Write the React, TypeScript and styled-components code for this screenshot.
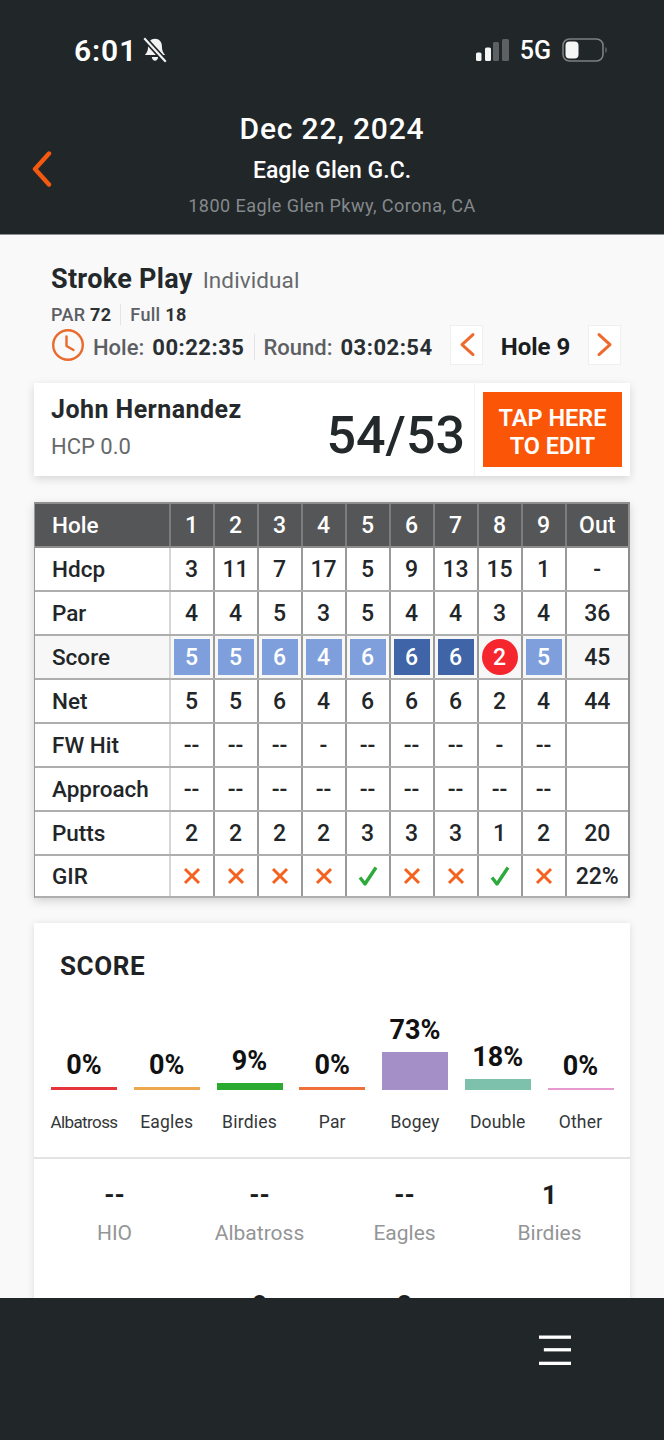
import React from 'react';
import styled, { createGlobalStyle } from 'styled-components';

const GlobalStyle = createGlobalStyle`
  html, body { margin: 0; padding: 0; background: #212629; }
  * { box-sizing: border-box; }
  body { font-family: Roboto, "Liberation Sans", sans-serif; }
`;

const Screen = styled.div`
  width: 664px;
  height: 1440px;
  display: flex;
  flex-direction: column;
  overflow: hidden;
  background: #f9f9fa;
`;

const TopBar = styled.header`
  height: 235px;
  flex: none;
  background: #212629;
  color: #fff;
  border-bottom: 1px solid #8d9093;
`;

const StatusBar = styled.div`
  height: 100px;
  padding: 30px 56px 0 74px;
  display: flex;
  justify-content: space-between;
  align-items: flex-start;
`;

const StatusGroup = styled.div`
  display: flex;
  align-items: center;
  height: 40px;
  gap: ${props => props.$gap}px;
`;

const Clock = styled.span`
  font-size: 30px;
  font-weight: 600;
  letter-spacing: 0.9px;
`;

const Network = styled.span`
  font-size: 25px;
  font-weight: 500;
`;

const TitleRow = styled.div`
  display: grid;
  grid-template-columns: 1fr auto 1fr;
  align-items: center;
`;

const BackLink = styled.div`
  padding-left: 30px;
  padding-top: 14px;
  display: flex;
`;

const TitleStack = styled.div`
  display: flex;
  flex-direction: column;
  align-items: center;
  margin-top: 10px;
`;

const DateText = styled.div`
  font-size: 30px;
  line-height: 38px;
  font-weight: 500;
  letter-spacing: 0.8px;
`;

const CourseText = styled.div`
  font-size: 23px;
  line-height: 36px;
  font-weight: 500;
  margin-top: 5px;
`;

const AddressText = styled.div`
  font-size: 18px;
  line-height: 34px;
  color: #85898c;
  letter-spacing: 0.45px;
`;

const Content = styled.main`
  flex: 1;
  min-height: 0;
  overflow: hidden;
  padding: 28px 34px 0;
`;

const RoundInfo = styled.section`
  padding: 0 9px 0 17px;
`;

const PlayLine = styled.div`
  display: flex;
  align-items: baseline;
  gap: 10px;
  height: 34px;
`;

const PlayName = styled.span`
  font-size: 27px;
  font-weight: 700;
  color: #23282b;
  letter-spacing: 0.3px;
`;

const PlayType = styled.span`
  font-size: 22.5px;
  color: #66696c;
  letter-spacing: 0.1px;
`;

const ParLine = styled.div`
  display: flex;
  align-items: center;
  height: 26px;
  margin-top: 4px;
  font-size: 18px;
  font-weight: 500;
  color: #5c6063;
  letter-spacing: 0.3px;
`;

const ParItem = styled.span`
  padding-right: 9px;
  & + & {
    padding-left: 9px;
    border-left: 1px solid #e4e4e6;
  }
  b {
    color: #2d3134;
    font-weight: 700;
  }
`;

const TimerLine = styled.div`
  display: flex;
  align-items: center;
  height: 40px;
  margin-top: -2px;
`;

const TimerText = styled.span`
  font-size: 22px;
  font-weight: 500;
  color: #5c6063;
  margin-left: ${props => props.$left || 0}px;
  padding-top: 4px;
  white-space: nowrap;
  b {
    color: #2a2f32;
    font-weight: 700;
    margin-left: 8px;
    letter-spacing: 0.5px;
  }
`;

const TimerDivider = styled.span`
  width: 1px;
  height: 26px;
  background: #e4e4e6;
  margin-left: 10px;
  margin-right: 8px;
  margin-top: 4px;
`;

const HoleNav = styled.div`
  margin-left: auto;
  display: flex;
  align-items: center;
`;

const HoleButton = styled.div`
  width: 33px;
  height: 40px;
  background: #fff;
  border: 1px solid #efeff0;
  display: flex;
  align-items: center;
  justify-content: center;
`;

const HoleLabel = styled.span`
  width: 105px;
  text-align: center;
  font-size: 24px;
  font-weight: 700;
  color: #1b1e20;
  padding-top: 4px;
`;

const PlayerCard = styled.section`
  height: 93px;
  margin-top: 18px;
  background: #fff;
  box-shadow: 0 3px 9px rgba(0, 0, 0, 0.14);
  display: flex;
  align-items: center;
  padding-left: 17px;
`;

const PlayerInfo = styled.div`
  flex: 1;
  padding-bottom: 4px;
`;

const PlayerName = styled.div`
  font-size: 25px;
  line-height: 32px;
  font-weight: 700;
  color: #26292c;
  letter-spacing: 0.45px;
`;

const PlayerHcp = styled.div`
  font-size: 22px;
  line-height: 30px;
  color: #66696c;
  margin-top: 6px;
`;

const TotalScore = styled.div`
  font-size: 52px;
  font-weight: 500;
  color: #23282b;
  padding-right: 9px;
  margin-top: 12px;
`;

const EditCell = styled.div`
  height: 100%;
  padding: 9px 8px 9px 8px;
  border-left: 1px solid #f3f3f4;
`;

const EditButton = styled.div`
  width: 139px;
  height: 75px;
  background: #fb5607;
  color: #fff;
  font-size: 23.5px;
  line-height: 28px;
  font-weight: 600;
  text-align: center;
  display: flex;
  align-items: center;
  justify-content: center;
  padding-top: 4px;
`;

const ScoreTable = styled.section`
  width: 596px;
  margin-top: 26px;
  background: #fff;
  border-top: 2px solid #8e8e8e;
  border-left: 1px solid #9a9a9a;
  border-right: 2px solid #8e8e8e;
  box-shadow: 0 3px 9px rgba(0, 0, 0, 0.16);
`;

const TableRow = styled.div`
  display: grid;
  grid-template-columns: 135.5px repeat(9, 44px) 1fr;
  height: ${props => props.$height || 44}px;
  background: ${props => (props.$head ? '#555657' : props.$tint ? '#f7f7f7' : '#fff')};
  color: ${props => (props.$head ? '#fff' : '#222629')};
  border-bottom: 2px solid ${props => (props.$head ? '#8e8e8e' : '#aeaeae')};
`;

const LabelCell = styled.div`
  display: flex;
  align-items: center;
  padding-left: 17px;
  font-size: 22.5px;
  font-weight: 500;
  border-right: 2px solid ${props => (props.$head ? '#7d7d7d' : '#d6d6d6')};
`;

const ValueCell = styled.div`
  display: flex;
  align-items: center;
  justify-content: center;
  font-size: 23px;
  font-weight: 500;
  border-right: 2px solid ${props => (props.$head ? '#7d7d7d' : '#9a9a9a')};
  &:last-child {
    border-right: 0;
  }
`;

const ScoreChip = styled.span`
  width: 36px;
  height: 36px;
  display: flex;
  align-items: center;
  justify-content: center;
  color: #fff;
  font-weight: 500;
  background: ${props => props.$color};
  border-radius: ${props => (props.$round ? '50%' : '0')};
`;

const SummaryCard = styled.section`
  width: 596px;
  margin-top: 25px;
  background: #fff;
  box-shadow: 0 1px 7px rgba(0, 0, 0, 0.12);
`;

const SummaryTitle = styled.h2`
  margin: 0;
  padding: 26px 0 0 26px;
  font-size: 26px;
  line-height: 34px;
  font-weight: 700;
  color: #1f2326;
  letter-spacing: 0.6px;
`;

const Bars = styled.div`
  height: 176px;
  padding: 0 17px;
  display: grid;
  grid-template-columns: repeat(7, 66px);
  column-gap: 16.75px;
  border-bottom: 2px solid #e3e3e4;
`;

const BarColumn = styled.div`
  display: flex;
  flex-direction: column;
  align-items: center;
  justify-content: flex-end;
`;

const BarPercent = styled.div`
  font-size: 27px;
  line-height: 32px;
  font-weight: 700;
  color: #111;
  margin-bottom: 6px;
`;

const Bar = styled.div`
  width: 100%;
  height: ${props => props.$height}px;
  background: ${props => props.$color};
`;

const BarLabel = styled.div`
  height: 67px;
  padding-top: 21px;
  font-size: ${props => (props.$tight ? 17 : 17.5)}px;
  line-height: 22px;
  color: #33373a;
  white-space: nowrap;
  letter-spacing: ${props => (props.$tight ? '-0.6px' : '0.2px')};
`;

const Stats = styled.div`
  padding: 20px 8px 0;
  display: grid;
  grid-template-columns: repeat(4, 145px);
  row-gap: 42px;
`;

const Stat = styled.div`
  display: flex;
  flex-direction: column;
  align-items: center;
`;

const StatValue = styled.div`
  font-size: 26px;
  line-height: 32px;
  font-weight: 700;
  color: #1b1e20;
`;

const StatLabel = styled.div`
  font-size: 21px;
  line-height: 28px;
  margin-top: 8px;
  color: #949596;
`;

const BottomBar = styled.footer`
  height: 142px;
  flex: none;
  background: #212629;
  display: flex;
  justify-content: flex-end;
  padding: 37px 93px 0 0;
`;

const holes = [1, 2, 3, 4, 5, 6, 7, 8, 9];
const light = '#7f9fdc';
const dark = '#3f64a8';

const rows = [
  { label: 'Hdcp', values: ['3', '11', '7', '17', '5', '9', '13', '15', '1', '-'] },
  { label: 'Par', values: ['4', '4', '5', '3', '5', '4', '4', '3', '4', '36'] },
];

const lowerRows = [
  { label: 'Net', values: ['5', '5', '6', '4', '6', '6', '6', '2', '4', '44'] },
  { label: 'FW Hit', values: ['--', '--', '--', '-', '--', '--', '--', '-', '--', ''] },
  { label: 'Approach', values: ['--', '--', '--', '--', '--', '--', '--', '--', '--', ''] },
  { label: 'Putts', values: ['2', '2', '2', '2', '3', '3', '3', '1', '2', '20'] },
];

const scores = [
  { value: 5, color: light },
  { value: 5, color: light },
  { value: 6, color: light },
  { value: 4, color: light },
  { value: 6, color: light },
  { value: 6, color: dark },
  { value: 6, color: dark },
  { value: 2, color: '#f5262e', round: true },
  { value: 5, color: light },
];

const gir = [false, false, false, false, true, false, false, true, false];

const distribution = [
  { label: 'Albatross', percent: '0%', height: 3, color: '#e5343a', tight: true },
  { label: 'Eagles', percent: '0%', height: 3, color: '#eda74e' },
  { label: 'Birdies', percent: '9%', height: 7, color: '#2aaa2e' },
  { label: 'Par', percent: '0%', height: 3, color: '#f0703a' },
  { label: 'Bogey', percent: '73%', height: 38, color: '#a48fc6' },
  { label: 'Double', percent: '18%', height: 11, color: '#7dc0ab' },
  { label: 'Other', percent: '0%', height: 2, color: '#e79ad0' },
];

const statRows = [
  ['--', 'HIO'], ['--', 'Albatross'], ['--', 'Eagles'], ['1', 'Birdies'],
  ['--', 'Par'], ['8', 'Bogey'], ['2', 'Double'], ['--', 'Other'],
];

const MuteBell = () => (
  <svg width="28" height="28" viewBox="0 0 26 26" fill="none">
    <path d="M13 2.500c-4 0-6.400 3-6.400 6.800 0 4.200-1 6-3 8.400h18.800c-2-2.400-3-4.200-3-8.400 0-3.800-2.400-6.800-6.400-6.800z" fill="#f2f3f3" />
    <path d="M10 19.500c.4 2 1.500 3.500 3 3.500s2.600-1.500 3-3.500z" fill="#f2f3f3" />
    <path d="M3 2l20 22" stroke="#212629" strokeWidth="5" />
    <path d="M3 2l20 22" stroke="#f2f3f3" strokeWidth="2" />
  </svg>
);

const Signal = () => (
  <svg width="33" height="22" viewBox="0 0 33 22">
    <rect x="0" y="13.500" width="5.500" height="8.500" rx="1.500" fill="#f4f5f5" />
    <rect x="9" y="8.500" width="6" height="13.500" rx="1.500" fill="#f4f5f5" />
    <rect x="17" y="3" width="6" height="19" rx="1.500" fill="#5d6164" />
    <rect x="26" y="0" width="7" height="22" rx="1.500" fill="#5d6164" />
  </svg>
);

const Battery = () => (
  <svg width="46" height="24" viewBox="0 0 46 24">
    <rect x="1" y="1" width="40" height="22" rx="6.500" fill="none" stroke="#7c8083" strokeWidth="1.600" />
    <rect x="3.500" y="3.500" width="13" height="17" rx="4" fill="#f4f5f5" />
    <path d="M43.500 9c1.500.6 1.500 5.400 0 6z" fill="#7c8083" />
  </svg>
);

const Chevron = ({ left, size = 18 }: { left?: boolean; size?: number }) => (
  <svg width={size} height={size * 1.4} viewBox="0 0 18 25" fill="none">
    <path
      d={left ? 'M15 2.500 4 12.500l11 10' : 'M3 2.500l11 10-11 10'}
      stroke="#ee6a2c"
      strokeWidth="3"
      strokeLinecap="round"
      strokeLinejoin="round"
    />
  </svg>
);

const BackChevron = () => (
  <svg width="24" height="36" viewBox="0 0 24 36" fill="none">
    <path d="M19 2.500 5 18l14 15.500" stroke="#f4590f" strokeWidth="4.400" strokeLinecap="round" strokeLinejoin="round" />
  </svg>
);

const TimerIcon = () => (
  <svg width="34" height="34" viewBox="0 0 34 34" fill="none" style={{ flex: 'none' }}>
    <circle cx="17" cy="17" r="14.800" stroke="#ea6a2c" strokeWidth="2.400" />
    <path d="M15.500 8.500v9.500l7 4" stroke="#ea6a2c" strokeWidth="2.400" strokeLinecap="round" strokeLinejoin="round" />
  </svg>
);

const Miss = () => (
  <svg width="18" height="18" viewBox="0 0 18 18" fill="none">
    <path d="M2 2l14 14M16 2 2 16" stroke="#f4621f" strokeWidth="3" />
  </svg>
);

const Hit = () => (
  <svg width="20" height="20" viewBox="0 0 20 20" fill="none">
    <path d="M2 11.500 7 18 18 1.500" stroke="#2eaa3c" strokeWidth="3.400" strokeLinejoin="round" />
  </svg>
);

const MenuIcon = () => (
  <svg width="32" height="34" viewBox="0 0 33 34">
    <rect x="0" y="0" width="33" height="3.400" fill="#fff" />
    <rect x="5" y="13" width="28" height="3.400" fill="#fff" />
    <rect x="0" y="27" width="33" height="3.400" fill="#fff" />
  </svg>
);

export default function App() {
  return (
    <Screen>
      <GlobalStyle />
      <TopBar>
        <StatusBar>
          <StatusGroup $gap={4}>
            <Clock>6:01</Clock>
            <MuteBell />
          </StatusGroup>
          <StatusGroup $gap={11}>
            <Signal />
            <Network>5G</Network>
            <Battery />
          </StatusGroup>
        </StatusBar>
        <TitleRow>
          <BackLink><BackChevron /></BackLink>
          <TitleStack>
            <DateText>Dec 22, 2024</DateText>
            <CourseText>Eagle Glen G.C.</CourseText>
            <AddressText>1800 Eagle Glen Pkwy, Corona, CA</AddressText>
          </TitleStack>
          <div />
        </TitleRow>
      </TopBar>

      <Content>
        <RoundInfo>
          <PlayLine>
            <PlayName>Stroke Play</PlayName>
            <PlayType>Individual</PlayType>
          </PlayLine>
          <ParLine>
            <ParItem>PAR <b>72</b></ParItem>
            <ParItem>Full <b>18</b></ParItem>
          </ParLine>
          <TimerLine>
            <TimerIcon />
            <TimerText $left={8}>Hole:<b>00:22:35</b></TimerText>
            <TimerDivider />
            <TimerText>Round:<b>03:02:54</b></TimerText>
            <HoleNav>
              <HoleButton><Chevron left /></HoleButton>
              <HoleLabel>Hole 9</HoleLabel>
              <HoleButton><Chevron /></HoleButton>
            </HoleNav>
          </TimerLine>
        </RoundInfo>

        <PlayerCard>
          <PlayerInfo>
            <PlayerName>John Hernandez</PlayerName>
            <PlayerHcp>HCP 0.0</PlayerHcp>
          </PlayerInfo>
          <TotalScore>54/53</TotalScore>
          <EditCell>
            <EditButton><span>TAP HERE<br />TO EDIT</span></EditButton>
          </EditCell>
        </PlayerCard>

        <ScoreTable>
          <TableRow $head>
            <LabelCell $head>Hole</LabelCell>
            {holes.map(hole => <ValueCell $head key={hole}>{hole}</ValueCell>)}
            <ValueCell $head>Out</ValueCell>
          </TableRow>
          {rows.map(row => (
            <TableRow key={row.label}>
              <LabelCell>{row.label}</LabelCell>
              {row.values.map((value, i) => <ValueCell key={i}>{value}</ValueCell>)}
            </TableRow>
          ))}
          <TableRow $tint>
            <LabelCell>Score</LabelCell>
            {scores.map((score, i) => (
              <ValueCell key={i}>
                <ScoreChip $color={score.color} $round={score.round}>{score.value}</ScoreChip>
              </ValueCell>
            ))}
            <ValueCell>45</ValueCell>
          </TableRow>
          {lowerRows.map(row => (
            <TableRow key={row.label}>
              <LabelCell>{row.label}</LabelCell>
              {row.values.map((value, i) => <ValueCell key={i}>{value}</ValueCell>)}
            </TableRow>
          ))}
          <TableRow $height={42}>
            <LabelCell>GIR</LabelCell>
            {gir.map((hit, i) => <ValueCell key={i}>{hit ? <Hit /> : <Miss />}</ValueCell>)}
            <ValueCell>22%</ValueCell>
          </TableRow>
        </ScoreTable>

        <SummaryCard>
          <SummaryTitle>SCORE</SummaryTitle>
          <Bars>
            {distribution.map(item => (
              <BarColumn key={item.label}>
                <BarPercent>{item.percent}</BarPercent>
                <Bar $height={item.height} $color={item.color} />
                <BarLabel $tight={item.tight}>{item.label}</BarLabel>
              </BarColumn>
            ))}
          </Bars>
          <Stats>
            {statRows.map(([value, label]) => (
              <Stat key={label}>
                <StatValue>{value}</StatValue>
                <StatLabel>{label}</StatLabel>
              </Stat>
            ))}
          </Stats>
        </SummaryCard>
      </Content>

      <BottomBar>
        <MenuIcon />
      </BottomBar>
    </Screen>
  );
}
